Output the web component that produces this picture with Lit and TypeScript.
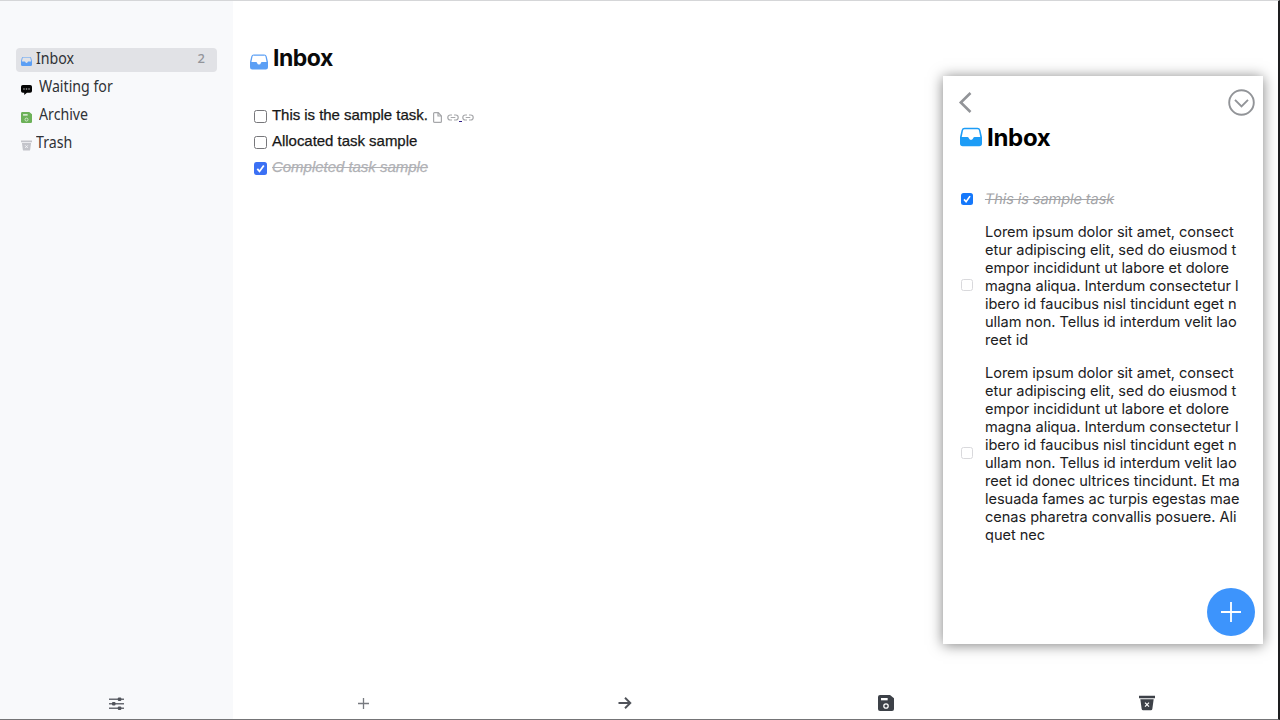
import { LitElement, html, css, svg } from "lit";
import { customElement } from "lit/decorators.js";

const inbox = svg`<path fill="currentColor" fill-rule="evenodd" d="M5 2h14a3.400 3.400 0 0 1 3.300 2.500L24 12v7a3 3 0 0 1-3 3H3a3 3 0 0 1-3-3v-7l1.700-7.500A3.400 3.400 0 0 1 5 2Zm0 1.500a1.700 1.700 0 0 0-1.700 1.400L1.900 12H8q1.300 0 1.500 1.200 .5 2 2.500 2t2.500-2q.2-1.200 1.500-1.200h6.100L20.700 4.900A1.700 1.700 0 0 0 19 3.500Z"/>`;
const chat = svg`<path fill="currentColor" d="M4 2h16a4 4 0 0 1 4 4v9a4 4 0 0 1-4 4h-7l-6 5v-5H4a4 4 0 0 1-4-4V6a4 4 0 0 1 4-4Z"/><path fill="#999" d="M5 9.500h3v3H5zm5.500 0h3v3h-3zM16 9.500h3v3h-3z"/>`;
const disk = (hole: string) => svg`<path fill="currentColor" d="M3 0h15l6 5v16a3 3 0 0 1-3 3H3a3 3 0 0 1-3-3V3a3 3 0 0 1 3-3Z"/><path fill=${hole} d="M4.500 4.500h10V8h-10z"/><circle cx="12" cy="16.500" r="3.300" fill="none" stroke=${hole} stroke-width="1.900"/>`;
const bin = (hole: string) => svg`<path fill="currentColor" d="M0 1h24v4H0zM2 6.500h20l-2 14.500q-.3 2-2.300 2H6.300Q4.300 23 4 21Z"/><path d="m9 11.500 6 6m0-6-6 6" fill="none" stroke=${hole} stroke-width="1.800"/>`;

@customElement("app-root")
export class AppRoot extends LitElement {
  static styles = css`
    :host { display: block; width: 1280px; height: 720px; overflow: hidden; font-family: "Liberation Sans", Arial, sans-serif; }
    * { box-sizing: border-box; }
    svg { display: block; flex: none; overflow: visible; }
    .app { position: relative; display: flex; height: 720px; border-top: 1px solid #d5d6d8; border-right: 2px solid #1d1d1f; border-bottom: 1px solid #747476; background: #fff; }
    .side { width: 232.500px; background: #f8f9fb; display: flex; flex-direction: column; padding: 47px 16px 0; }
    .nav { display: flex; height: 24px; width: 201px; margin-bottom: 4px; padding: 0 12px 0 5px; border-radius: 4px; font: 15.500px/21px "Noto Sans", sans-serif; color: #303236; }
    .nav.on { background: #e1e2e6; }
    .nav svg { width: 11px; height: 11px; margin-top: 8px; }
    .nav .name { margin-left: 4px; white-space: nowrap; transform-origin: 0 50%; transform: scaleX(.915); }
    .nav .name.wide { margin-left: 7px; }
    .count { margin-left: auto; font-size: 13px; font-weight: 500; color: #92949a; }
    .blue { color: #5b9ff5; } .black { color: #050505; } .green { color: #6cb158; } .pale { color: #c3c4ca; }
    .tools { height: 32px; margin-top: auto; display: flex; align-items: center; justify-content: center; color: #50535a; }
    .main { flex: 1; display: flex; flex-direction: column; }
    .title { display: flex; margin: 42px 0 0 17px; height: 32px; font: 700 23px/30px Inter, sans-serif; letter-spacing: -.5px; color: #0a0a0a; }
    .title svg { width: 18px; height: 18px; margin: 10px 5.500px 0 0; }
    .tasks { margin: 27px 0 0 21.500px; }
    .task { height: 26px; display: flex; align-items: center; font-size: 15px; line-height: 22px; color: #171717; -webkit-text-stroke: .25px currentColor; }
    .box { width: 13px; height: 13px; border: 1px solid #77777b; border-radius: 2.500px; background: #fff; flex: none; }
    .task .box { margin: 3px 5px 0 0; }
    .box.checked { background: #3b70f4; border: 0; }
    .box svg { width: 100%; height: 100%; }
    .done { color: #b0b1b5; font-style: italic; text-decoration: line-through; }
    .t1 { letter-spacing: -.04px; } .t2 { letter-spacing: -.03px; } .t3 { letter-spacing: -.03px; }
    .meta { display: flex; align-items: center; margin: 4px 0 0 5px; color: #a6a7aa; }
    .meta .link { margin-left: 5px; }
    .meta .link + .dash { width: 3px; height: 1px; margin-top: 8px; background: #34218b; }
    .foot { height: 32px; margin-top: auto; display: grid; grid-template-columns: repeat(4, 1fr); align-items: center; justify-items: center; color: #3d4148; }
    .phone { position: absolute; left: 943px; top: 75px; width: 320px; height: 568px; padding: 13px 8.500px 8px 16px; background: #fff; box-shadow: 0 1px 13px rgba(0, 0, 0, .5); display: flex; flex-direction: column; font-family: Inter, sans-serif; }
    .bar { display: flex; justify-content: space-between; height: 27px; color: #929498; }
    .head { display: flex; height: 36px; margin: 4px 0 0 1px; font-weight: 700; font-size: 24px; line-height: 36px; letter-spacing: -.3px; color: #000; }
    .head svg { width: 22px; height: 22px; margin: 5.500px 5px 0 0; color: #1c9cf6; }
    .row { display: flex; align-items: center; margin-left: 2px; font-size: 14.600px; line-height: 18px; letter-spacing: -.055px; color: #202022; }
    .row .box { width: 12px; height: 12px; margin-right: 12px; border-color: #d9d9dc; }
    .row .box.checked { background: #1578fb; border: 0; }
    .first { margin-top: 34px; margin-bottom: 15px; }
    .first .done { color: #a3a4a7; font-style: normal; letter-spacing: -.1px; transform: skewX(-10deg); }
    .para { margin-bottom: 14.600px; }
    .para .box { margin-top: -2px; }
    .lines { white-space: pre; }
    .fab { width: 48px; height: 48px; margin: auto -.5px 0 auto; border-radius: 50%; background: #3d94fc; display: flex; align-items: center; justify-content: center; }
  `;

  private check() {
    return html`<span class="box checked"><svg viewBox="0 0 13 13"><path d="m3.300 6.900 2.200 2.500 4.300-6" fill="none" stroke="#fff" stroke-width="1.800"/></svg></span>`;
  }

  private link(cls: string) {
    return html`<svg class=${cls} width="12" height="7" viewBox="0 0 12 7"><path d="M5 1H3.300a2.500 2.500 0 0 0 0 5H5M7 1h1.700a2.500 2.500 0 0 1 0 5H7M3.700 3.500h4.600" fill="none" stroke="currentColor" stroke-width="1.200"/></svg>`;
  }

  render() {
    const intro = ["Lorem ipsum dolor sit amet, consect", "etur adipiscing elit, sed do eiusmod t", "empor incididunt ut labore et dolore", "magna aliqua. Interdum consectetur l", "ibero id faucibus nisl tincidunt eget n", "ullam non. Tellus id interdum velit lao"];
    const shortText = [...intro, "reet id"];
    const longText = [...intro, "reet id donec ultrices tincidunt. Et ma", "lesuada fames ac turpis egestas mae", "cenas pharetra convallis posuere. Ali", "quet nec"];
    return html`<div class="app">
      <nav class="side">
        <div class="nav on"><svg class="blue" viewBox="0 0 24 24">${inbox}</svg><span class="name">Inbox</span><span class="count">2</span></div>
        <div class="nav"><svg class="black" viewBox="0 0 24 24">${chat}</svg><span class="name wide">Waiting for</span></div>
        <div class="nav"><svg class="green" viewBox="0 0 24 24">${disk("#dcebd8")}</svg><span class="name wide">Archive</span></div>
        <div class="nav"><svg class="pale" viewBox="0 0 24 24">${bin("#f8f9fb")}</svg><span class="name">Trash</span></div>
        <div class="tools"><svg width="15" height="13" viewBox="0 0 15 13" fill="currentColor"><path d="M0 1.500h15v1.400H0zM0 6h15v1.400H0zM0 10.500h15v1.400H0z" opacity=".85"/><rect x="8.800" y=".5" width="3.500" height="3.500" rx="1"/><rect x="3" y="4.900" width="3.500" height="3.500" rx="1"/><rect x="8.800" y="9.400" width="3.500" height="3.500" rx="1"/></svg></div>
      </nav>
      <main class="main">
        <div class="title"><svg class="blue" viewBox="0 0 24 24">${inbox}</svg><span>Inbox</span></div>
        <div class="tasks">
          <div class="task"><span class="box"></span><span class="t1">This is the sample task.</span>
            <span class="meta"><svg width="9" height="11" viewBox="0 0 9 11"><path d="M1.600 .6h3.700L8.400 4v5.400q0 1-1 1H1.600q-1 0-1-1V1.600q0-1 1-1ZM5 .6V4h3.400" fill="none" stroke="currentColor" stroke-width="1.200"/></svg>${this.link("link")}<span class="dash"></span>${this.link("")}</span></div>
          <div class="task"><span class="box"></span><span class="t2">Allocated task sample</span></div>
          <div class="task">${this.check()}<span class="done t3">Completed task sample</span></div>
        </div>
        <div class="foot">
          <svg width="11" height="11" viewBox="0 0 11 11"><path d="M5.500 0v11M0 5.500h11" stroke="#777a80" stroke-width="1.300"/></svg>
          <svg width="13" height="12" viewBox="0 0 13 12"><path d="M.5 6h11.500M7 .8 12.300 6 7 11.200" fill="none" stroke="#50535a" stroke-width="1.900"/></svg>
          <svg width="16" height="16" viewBox="0 0 24 24">${disk("#fff")}</svg>
          <svg width="16" height="16" viewBox="0 0 24 24">${bin("#fff")}</svg>
        </div>
      </main>
      <section class="phone">
        <div class="bar">
          <svg width="13" height="22" viewBox="0 0 13 22"><path transform="translate(0 3)" d="M11.500 1 1.800 10.500l9.700 9.500" fill="none" stroke="currentColor" stroke-width="2.600"/></svg>
          <svg width="27" height="27" viewBox="0 0 27 27"><circle cx="13.500" cy="13.500" r="12.300" fill="none" stroke="currentColor" stroke-width="1.900"/><path d="m7 10.800 6.500 6.500 6.500-6.500" fill="none" stroke="currentColor" stroke-width="1.900"/></svg>
        </div>
        <div class="head"><svg viewBox="0 0 24 24">${inbox}</svg><span>Inbox</span></div>
        <div class="row first">${this.check()}<span class="done">This is sample task</span></div>
        <div class="row para"><span class="box"></span><div class="lines">${shortText.join("\n")}</div></div>
        <div class="row para"><span class="box"></span><div class="lines">${longText.join("\n")}</div></div>
        <div class="fab"><svg width="20" height="20" viewBox="0 0 20 20"><path d="M10 0v20M0 10h20" stroke="#fff" stroke-width="1.800"/></svg></div>
      </section>
    </div>`;
  }
}
